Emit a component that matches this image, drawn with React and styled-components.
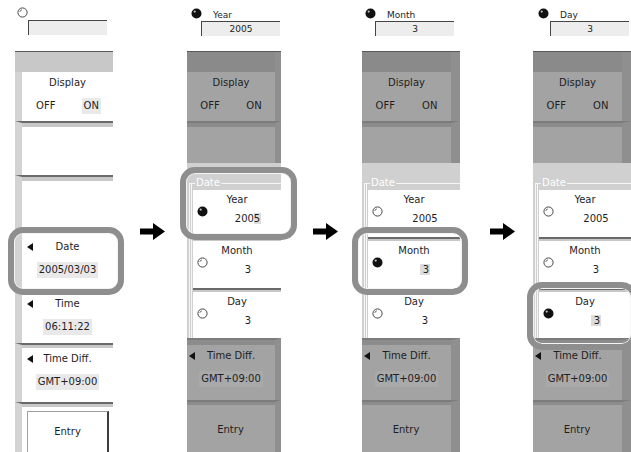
import React from 'react';
import styled, { createGlobalStyle, css } from 'styled-components';

const GlobalStyle = createGlobalStyle`
  html, body {
    margin: 0;
    padding: 0;
    background: #fff;
  }
  body {
    font-family: "DejaVu Sans", Verdana, sans-serif;
    color: #1e1e1e;
  }
`;

const edges = css`
  border-left: ${(p) => p.$lead || 0}px solid #d3d3d3;
  border-right: ${(p) => p.$strip || 0}px solid #8f8f8f;
`;

const Page = styled.div`
  display: flex;
  align-items: flex-start;
  width: 631px;
  height: 452px;
  overflow: hidden;
  padding-left: 15px;
  box-sizing: border-box;
`;

const ArrowCell = styled.div`
  width: ${(p) => p.$w}px;
  flex-shrink: 0;
  padding: 223px 0 0 ${(p) => p.$offset}px;
  box-sizing: border-box;
`;

const Panel = styled.div`
  position: relative;
  width: ${(p) => p.$w}px;
  height: 452px;
  flex-shrink: 0;
  display: flex;
  flex-direction: column;
`;

const Header = styled.div`
  height: 52px;
  flex-shrink: 0;
  box-sizing: border-box;
  background: #fff;
  border-bottom: 1px solid #5a5a5a;
  padding: ${(p) => p.$top}px 0 0 ${(p) => p.$pad}px;
`;

const KnobRow = styled.div`
  display: flex;
  align-items: center;
  gap: 11px;
  height: 15px;
`;

const FieldName = styled.span`
  font-size: 9px;
  line-height: 11px;
  margin-top: 3px;
`;

const ValueBox = styled.div`
  margin-left: ${(p) => p.$x}px;
  width: 79px;
  height: 15px;
  box-sizing: border-box;
  background: #ededed;
  border-top: 1px solid #444;
  border-left: 1px solid #444;
  font-size: 9px;
  line-height: 14px;
  text-align: center;
`;

const Band = styled.div`
  height: ${(p) => p.$h}px;
  flex-shrink: 0;
  background: ${(p) => (p.$dim ? '#8a8a8a' : '#c8c8c8')};
  ${edges}
`;

const Blank = styled.div`
  height: ${(p) => p.$h}px;
  flex-shrink: 0;
  box-sizing: border-box;
  background: ${(p) => (p.$dim ? '#a3a3a3' : '#fff')};
  ${edges}
`;

const Sep = styled.div`
  height: ${(p) => p.$h || 5}px;
  flex-shrink: 0;
  box-sizing: border-box;
  background: ${(p) => (p.$dim ? '#8c8c8c' : '#c8c8c8')};
  border-top: 2px solid ${(p) => (p.$dim ? '#7c7c7c' : '#6a6a6a')};
  ${edges}
`;

const Item = styled.div`
  height: ${(p) => p.$h}px;
  flex-shrink: 0;
  box-sizing: border-box;
  background: ${(p) => (p.$dim ? '#a3a3a3' : '#fff')};
  padding-top: 5px;
  display: grid;
  grid-template-columns: 18px 1fr 18px;
  grid-template-rows: 12px 16px;
  row-gap: 9px;
  align-content: start;
  font-size: 10px;
  ${edges}
`;

const Label = styled.div`
  grid-column: 2;
  grid-row: 1;
  text-align: center;
  line-height: 12px;
  white-space: nowrap;
`;

const Marker = styled.svg`
  grid-column: 1;
  grid-row: 1;
  align-self: center;
  margin-left: ${(p) => p.$x}px;
`;

const Values = styled.div`
  grid-column: 1 / 4;
  grid-row: 2;
  display: flex;
  justify-content: ${(p) => (p.$spread ? 'space-around' : 'center')};
  line-height: 16px;
  white-space: nowrap;
`;

const Chip = styled.span`
  padding: 0 2px;
  background: ${(p) => (p.$on ? (p.$dim ? '#a9a9a9' : '#e9e9e9') : 'transparent')};
`;

const Group = styled.div`
  height: 175px;
  flex-shrink: 0;
  box-sizing: border-box;
  background: #d0d0d0;
  padding-top: 14px;
`;

const Frame = styled.fieldset`
  margin: 0 0 0 2px;
  padding: 1px 0 0 1px;
  min-width: 0;
  border: 0;
  border-top: 1px solid #f6f6f6;
  border-left: 3px double #f6f6f6;
`;

const Legend = styled.legend`
  color: #fff;
  font-size: 10px;
  line-height: 12px;
  padding: 0 1px;
  margin-left: 2px;
`;

const DialItem = styled.div`
  height: ${(p) => p.$h}px;
  box-sizing: border-box;
  background: #fff;
  padding-top: 4px;
  display: grid;
  grid-template-columns: 16px 1fr 16px;
  grid-template-rows: 12px 16px;
  row-gap: 5px;
  font-size: 10px;
`;

const DialKnob = styled.div`
  grid-column: 1;
  grid-row: 1 / 3;
  align-self: start;
  margin: 12px 0 0 4px;
  line-height: 0;
`;

const DialValue = styled.div`
  grid-column: 2 / 4;
  grid-row: 2;
  text-align: center;
  padding-left: 6px;
  line-height: 16px;
`;

const Cursor = styled.span`
  background: #dcdcdc;
  padding: 0 1px 0 ${(p) => (p.$wide ? 3 : 0)}px;
`;

const EntryRow = styled.div`
  flex: 1;
  box-sizing: border-box;
  background: ${(p) => (p.$dim ? '#a3a3a3' : '#fff')};
  padding: 4px 0 0 ${(p) => (p.$dim ? 0 : 5)}px;
  ${edges}
`;

const EntryButton = styled.div`
  width: ${(p) => (p.$dim ? '100%' : '82px')};
  height: 48px;
  box-sizing: border-box;
  padding-top: 14px;
  text-align: center;
  font-size: 10px;
  line-height: 12px;
  border: 1px solid ${(p) => (p.$dim ? 'transparent' : '#a0a0a0')};
  border-right: 2px solid ${(p) => (p.$dim ? 'transparent' : '#3c3c3c')};
`;

const Highlight = styled.div`
  position: absolute;
  left: ${(p) => p.$x}px;
  top: ${(p) => p.$y}px;
  width: ${(p) => p.$w}px;
  height: ${(p) => p.$h}px;
  box-sizing: border-box;
  border: 6px solid #8e8e8e;
  border-radius: 15px;
  box-shadow: inset 0 0 0 1px #f4f4f4;
  pointer-events: none;
`;

const Knob = ({ on }) => (
  <svg width="11" height="11" viewBox="0 0 11 11">
    {on ? (
      <>
        <circle cx="5.5" cy="5.5" r="5" fill="#111" />
        <circle cx="3.7" cy="3.6" r="1.1" fill="#bdbdbd" />
      </>
    ) : (
      <>
        <circle cx="5.5" cy="5.5" r="4.6" fill="#fff" stroke="#333" strokeWidth="0.9" />
        <path d="M2.9 4.7 A2.7 2.7 0 0 1 4.7 2.9" fill="none" stroke="#333" strokeWidth="0.9" />
      </>
    )}
  </svg>
);

const Pointer = ({ x }) => (
  <Marker $x={x} width="6" height="8" viewBox="0 0 6 8">
    <polygon points="6,0 0,4 6,8" fill="#111" />
  </Marker>
);

const Arrow = ({ w, offset }) => (
  <ArrowCell $w={w} $offset={offset}>
    <svg width="25" height="17" viewBox="0 0 25 17">
      <path d="M0 5.5h13V0l12 8.5-12 8.5v-5.5H0z" fill="#000" />
    </svg>
  </ArrowCell>
);

const Dial = ({ label, value, h, active }) => (
  <DialItem $h={h}>
    <DialKnob>
      <Knob on={active} />
    </DialKnob>
    <Label>{label}</Label>
    <DialValue>
      {active ? (
        <>
          {value.slice(0, -1)}
          <Cursor $wide={value.length === 1}>{value.slice(-1)}</Cursor>
        </>
      ) : (
        value
      )}
    </DialValue>
  </DialItem>
);

const DisplayItem = ({ dim, lead, strip }) => (
  <Item $h={49} $dim={dim} $lead={lead} $strip={strip}>
    <Label>Display</Label>
    <Values $spread>
      <Chip>OFF</Chip>
      <Chip $on={!dim} $dim={dim}>ON</Chip>
    </Values>
  </Item>
);

const TimeDiffItem = ({ h, dim, lead, strip, x }) => (
  <Item $h={h} $dim={dim} $lead={lead} $strip={strip}>
    <Pointer x={x} />
    <Label>Time Diff.</Label>
    <Values>
      <Chip $on $dim={dim}>GMT+09:00</Chip>
    </Values>
  </Item>
);

const ClockPanel = () => (
  <Panel $w={98}>
    <Header $top={5} $pad={2}>
      <KnobRow>
        <Knob />
      </KnobRow>
      <ValueBox $x={11} />
    </Header>
    <Band $h={20} />
    <DisplayItem lead={7} />
    <Sep $h={6} $lead={7} />
    <Blank $h={48} $lead={7} />
    <Sep $h={6} $lead={7} />
    <Blank $h={55} $lead={7} />
    <Item $h={53} $lead={7}>
      <Pointer x={5} />
      <Label>Date</Label>
      <Values>
        <Chip $on>2005/03/03</Chip>
      </Values>
    </Item>
    <Sep $h={4} $lead={7} />
    <Item $h={50} $lead={7}>
      <Pointer x={5} />
      <Label>Time</Label>
      <Values>
        <Chip $on>06:11:22</Chip>
      </Values>
    </Item>
    <Sep $lead={7} />
    <TimeDiffItem h={54} lead={7} x={5} />
    <Sep $lead={7} />
    <EntryRow $lead={7}>
      <EntryButton>Entry</EntryButton>
    </EntryRow>
    <Highlight $x={-7} $y={227} $w={116} $h={68} />
  </Panel>
);

const EditPanel = ({ w, strip, pad, boxX, field, value, hl }) => (
  <Panel $w={w}>
    <Header $top={6} $pad={pad}>
      <KnobRow>
        <Knob on />
        <FieldName>{field}</FieldName>
      </KnobRow>
      <ValueBox $x={boxX}>{value}</ValueBox>
    </Header>
    <Band $h={20} $dim $strip={strip} />
    <DisplayItem dim strip={strip} />
    <Sep $h={6} $dim $strip={strip} />
    <Blank $h={36} $dim $strip={strip} />
    <Group>
      <Frame>
        <Legend>Date</Legend>
        <Dial label="Year" value="2005" h={47} active={field === 'Year'} />
        <Sep $h={4} />
        <Dial label="Month" value="3" h={47} active={field === 'Month'} />
        <Sep $h={4} />
        <Dial label="Day" value="3" h={46} active={field === 'Day'} />
      </Frame>
    </Group>
    <Sep $h={7} $dim $strip={strip} />
    <TimeDiffItem h={55} dim strip={strip} x={2} />
    <Sep $dim $strip={strip} />
    <EntryRow $dim $strip={strip}>
      <EntryButton $dim>Entry</EntryButton>
    </EntryRow>
    <Highlight $x={hl.x} $y={hl.y} $w={hl.w} $h={hl.h} />
  </Panel>
);

const App = () => (
  <>
    <GlobalStyle />
    <Page>
      <ClockPanel />
      <Arrow w={74} offset={27} />
      <EditPanel
        w={94}
        strip={6}
        pad={4}
        boxX={10}
        field="Year"
        value="2005"
        hl={{ x: -7, y: 167, w: 117, h: 73 }}
      />
      <Arrow w={81} offset={32} />
      <EditPanel
        w={98}
        strip={9}
        pad={3}
        boxX={10}
        field="Month"
        value="3"
        hl={{ x: -10, y: 227, w: 116, h: 68 }}
      />
      <Arrow w={73} offset={30} />
      <EditPanel
        w={98}
        strip={9}
        pad={5}
        boxX={12}
        field="Day"
        value="3"
        hl={{ x: -6, y: 282, w: 110, h: 68 }}
      />
    </Page>
  </>
);

export default App;
